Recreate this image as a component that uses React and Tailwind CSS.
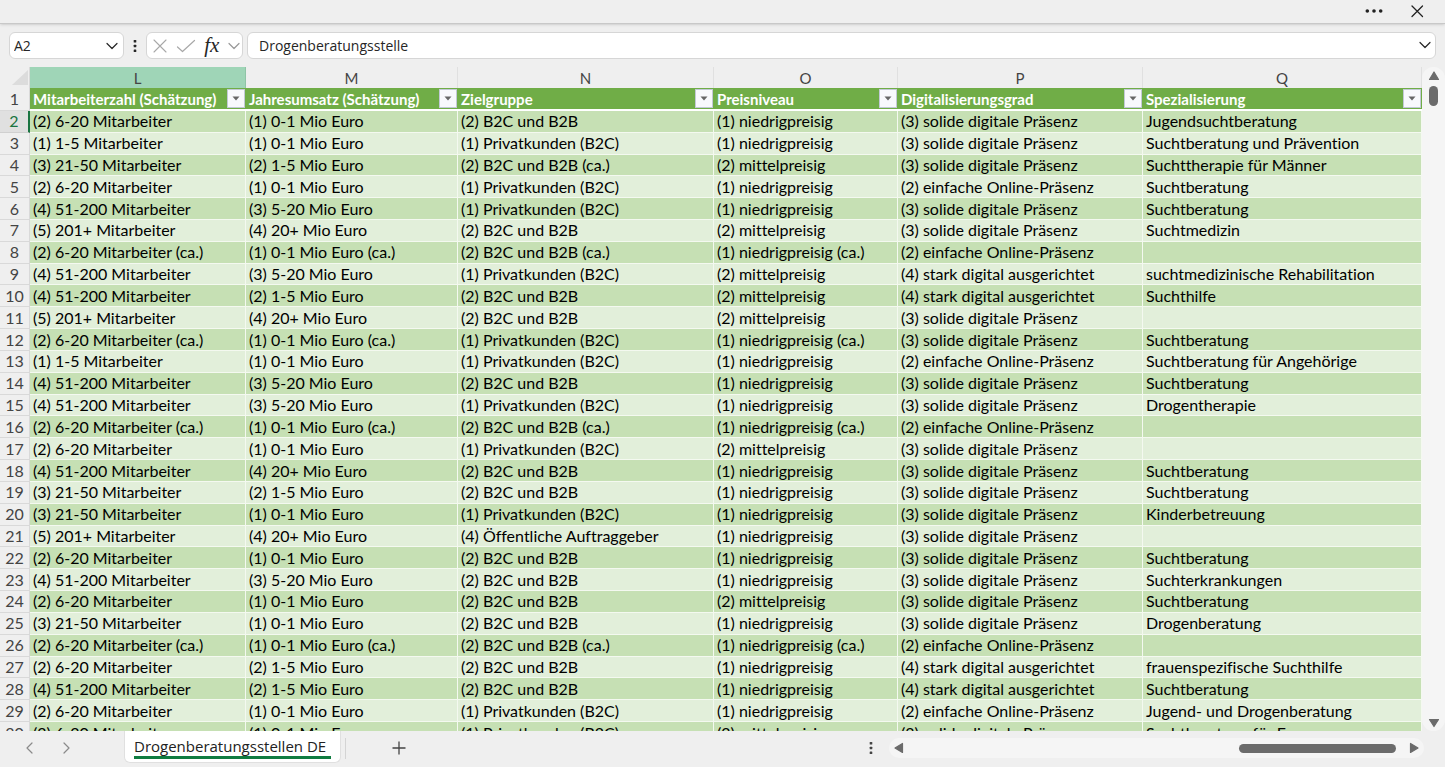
const M = {
  1: '(1) 1-5 Mitarbeiter',
  2: '(2) 6-20 Mitarbeiter',
  3: '(3) 21-50 Mitarbeiter',
  4: '(4) 51-200 Mitarbeiter',
  5: '(5) 201+ Mitarbeiter',
};
const U = { 1: '(1) 0-1 Mio Euro', 2: '(2) 1-5 Mio Euro', 3: '(3) 5-20 Mio Euro', 4: '(4) 20+ Mio Euro' };
const Z = { 1: '(1) Privatkunden (B2C)', 2: '(2) B2C und B2B', 4: '(4) Öffentliche Auftraggeber' };
const P = { 1: '(1) niedrigpreisig', 2: '(2) mittelpreisig' };
const D = { 2: '(2) einfache Online-Präsenz', 3: '(3) solide digitale Präsenz', 4: '(4) stark digital ausgerichtet' };

// [employees, revenue, audience, price, digital, speciality, columns marked "(ca.)"]
const DATA = [
  [2, 1, 2, 1, 3, 'Jugendsuchtberatung', ''],
  [1, 1, 1, 1, 3, 'Suchtberatung und Prävention', ''],
  [3, 2, 2, 2, 3, 'Suchttherapie für Männer', 'N'],
  [2, 1, 1, 1, 2, 'Suchtberatung', ''],
  [4, 3, 1, 1, 3, 'Suchtberatung', ''],
  [5, 4, 2, 2, 3, 'Suchtmedizin', ''],
  [2, 1, 2, 1, 2, '', 'LMNO'],
  [4, 3, 1, 2, 4, 'suchtmedizinische Rehabilitation', ''],
  [4, 2, 2, 2, 4, 'Suchthilfe', ''],
  [5, 4, 2, 2, 3, '', ''],
  [2, 1, 1, 1, 3, 'Suchtberatung', 'LMO'],
  [1, 1, 1, 1, 2, 'Suchtberatung für Angehörige', ''],
  [4, 3, 2, 1, 3, 'Suchtberatung', ''],
  [4, 3, 1, 1, 3, 'Drogentherapie', ''],
  [2, 1, 2, 1, 2, '', 'LMNO'],
  [2, 1, 1, 2, 3, '', ''],
  [4, 4, 2, 1, 3, 'Suchtberatung', ''],
  [3, 2, 2, 1, 3, 'Suchtberatung', ''],
  [3, 1, 1, 1, 3, 'Kinderbetreuung', ''],
  [5, 4, 4, 1, 3, '', ''],
  [2, 1, 2, 1, 3, 'Suchtberatung', ''],
  [4, 3, 2, 1, 3, 'Suchterkrankungen', ''],
  [2, 1, 2, 2, 3, 'Suchtberatung', ''],
  [3, 1, 2, 1, 3, 'Drogenberatung', ''],
  [2, 1, 2, 1, 2, '', 'LMNO'],
  [2, 2, 2, 1, 4, 'frauenspezifische Suchthilfe', ''],
  [4, 2, 2, 1, 4, 'Suchtberatung', ''],
  [2, 1, 1, 1, 2, 'Jugend- und Drogenberatung', ''],
  [2, 1, 1, 2, 3, 'Suchtberatung für Frauen', ''],
];

const COLUMNS = [
  ['L', 'Mitarbeiterzahl (Schätzung)'],
  ['M', 'Jahresumsatz (Schätzung)'],
  ['N', 'Zielgruppe'],
  ['O', 'Preisniveau'],
  ['P', 'Digitalisierungsgrad'],
  ['Q', 'Spezialisierung'],
];

function cellsOf([m, u, z, p, d, spec, ca]) {
  const mark = (text, col) => (ca.includes(col) ? `${text} (ca.)` : text);
  return [mark(M[m], 'L'), mark(U[u], 'M'), mark(Z[z], 'N'), mark(P[p], 'O'), D[d], spec];
}

function Chevron({ className, d = 'M1 3.5 6 8.5 11 3.5' }) {
  return (
    <svg viewBox="0 0 12 12" className={className} fill="none" stroke="currentColor" strokeWidth="1.2" strokeLinecap="round" strokeLinejoin="round" aria-hidden="true">
      <path d={d} />
    </svg>
  );
}

function Dots({ className }) {
  return (
    <svg viewBox="0 0 4 14" className={className} fill="currentColor" aria-hidden="true">
      <rect x="0.7" y="1" width="2.6" height="2.6" rx="0.6" />
      <rect x="0.7" y="5.7" width="2.6" height="2.6" rx="0.6" />
      <rect x="0.7" y="10.4" width="2.6" height="2.6" rx="0.6" />
    </svg>
  );
}

function Arrow({ d }) {
  return (
    <svg viewBox="0 0 12 12" className="h-3 w-3 text-[#6b6b6b]" fill="currentColor" stroke="currentColor" strokeWidth="1.2" strokeLinejoin="round" aria-hidden="true">
      <path d={d} />
    </svg>
  );
}

function TitleBar() {
  return (
    <header className="flex h-[24px] shrink-0 items-center justify-end gap-6 border-b border-[#c8c8c8] pr-5 pb-px text-[#222] shadow-sm">
      <button aria-label="Weitere Optionen" className="flex h-5 items-center">
        <svg viewBox="0 0 20 6" className="h-[6px] w-5" fill="currentColor" aria-hidden="true">
          <circle cx="2.3" cy="3" r="1.8" />
          <circle cx="9" cy="3" r="1.8" />
          <circle cx="15.700" cy="3" r="1.8" />
        </svg>
      </button>
      <button aria-label="Schließen" className="flex h-5 items-center">
        <svg viewBox="0 0 16 16" className="h-4 w-4" fill="none" stroke="currentColor" strokeWidth="1.3" strokeLinecap="round" aria-hidden="true">
          <path d="M3 3 13.500 13.500M13.500 3 3 13.500" />
        </svg>
      </button>
    </header>
  );
}

function FormulaBar() {
  return (
    <div className="flex h-[43px] shrink-0 items-center px-[9px] text-[#262626]">
      <div className="flex h-[27px] w-[115px] items-center rounded-md border border-[#d6d6d6] bg-white pr-[5px] pl-1">
        <input aria-label="Namenfeld" defaultValue="A2" className="min-w-0 flex-1 bg-transparent text-[14px] outline-none" />
        <button aria-label="Namen anzeigen">
          <Chevron className="h-3 w-3" />
        </button>
      </div>
      <Dots className="mx-[9px] h-[14px] w-1" />
      <div className="flex h-[27px] w-[97px] items-center justify-between rounded-md border border-[#d6d6d6] bg-white pr-[2px] pl-[6px]">
        <button aria-label="Abbrechen" className="text-[#a8a8a8]">
          <svg viewBox="0 0 14 14" className="h-[14px] w-[14px]" fill="none" stroke="currentColor" strokeWidth="1.1" strokeLinecap="round" aria-hidden="true">
            <path d="M1 1 13 13M13 1 1 13" />
          </svg>
        </button>
        <button aria-label="Eingeben" className="text-[#a8a8a8]">
          <svg viewBox="0 0 20 14" className="h-[14px] w-5" fill="none" stroke="currentColor" strokeWidth="1.2" strokeLinecap="round" strokeLinejoin="round" aria-hidden="true">
            <path d="M1.500 8 6.500 12.500 18.500 1.500" />
          </svg>
        </button>
        <button aria-label="Funktion einfügen" className="pb-[2px] font-['Liberation_Serif',serif] text-[21px] leading-5 italic">
          fx
        </button>
        <button aria-label="Funktionsliste" className="text-[#999]">
          <Chevron className="h-3 w-3" />
        </button>
      </div>
      <div className="ml-1 flex h-[27px] min-w-0 flex-1 items-center rounded-md border border-[#d6d6d6] bg-white pr-1 pl-[11px]">
        <input aria-label="Bearbeitungsleiste" defaultValue="Drogenberatungsstelle" className="min-w-0 flex-1 bg-transparent text-[14px] outline-none" />
        <button aria-label="Bearbeitungsleiste erweitern" className="pb-[2px]">
          <Chevron className="h-3 w-3" />
        </button>
      </div>
    </div>
  );
}

function Sheet() {
  return (
    <table className="h-[677px] w-full table-fixed border-separate border-spacing-0 font-[Lato,sans-serif] text-[16px] leading-5 whitespace-nowrap text-black [font-variant-ligatures:none]">
      <colgroup>
        <col className="w-[30px]" />
        <col className="w-[216px]" />
        <col className="w-[212px]" />
        <col className="w-[256px]" />
        <col className="w-[184px]" />
        <col className="w-[245px]" />
        <col />
      </colgroup>
      <thead className="text-[15px] text-[#444]">
        <tr className="h-[21px]">
          <td className="border-r border-[#d9d9d9] p-0">
            <svg viewBox="0 0 16 15" className="ml-auto mr-px h-[15px] w-4" fill="#dcdcdc" aria-hidden="true">
              <path d="M16 0V15H0Z" />
            </svg>
          </td>
          {COLUMNS.map(([letter], i) => (
            <th
              key={letter}
              scope="col"
              className={`border-r p-0 text-center font-normal ${i === 0 ? 'border-[#8fc4a6] bg-[#9fd5b7]' : 'border-[#e0e0e0]'}`}
            >
              {letter}
            </th>
          ))}
        </tr>
      </thead>
      <tbody>
        <tr className="h-[22px] bg-[#70ad47]">
          <th scope="row" className="border-r border-b border-[#d9d9d9] bg-[#efefef] p-0 font-normal text-[#444]">1</th>
          {COLUMNS.map(([letter, title]) => (
            <th key={letter} scope="col" className="border-b-2 border-white p-0 text-left text-[15px] font-bold text-white">
              <div className="flex h-5 items-end justify-between pr-px pl-[3px]">
                <span className="leading-[18px]">{title}</span>
                <button aria-label={`${title} filtern`} className="flex h-[19px] w-[18px] items-center justify-center border border-[#c3c9d6] bg-[#f8f9fc]">
                  <svg viewBox="0 0 8 5" className="h-[5px] w-2" fill="#666" aria-hidden="true">
                    <path d="M0.500 0.500h7L4 4.500Z" />
                  </svg>
                </button>
              </div>
            </th>
          ))}
        </tr>
        {DATA.map((record, r) => (
          <tr key={r} className={`h-[21px] ${r % 2 ? 'bg-[#e2efda]' : 'bg-[#c6e0b4]'}`}>
            <th
              scope="row"
              className={`border-b p-0 font-normal ${r === 0 ? 'border-r-2 border-b-[#d0d0d0] border-r-[#1a7441] bg-[#e0e0e0] text-[#1a7441]' : 'border-r border-[#d9d9d9] bg-[#efefef] text-[#444]'}`}
            >
              {r + 2}
            </th>
            {cellsOf(record).map((text, c) => (
              <td key={c} className="border-r border-b border-[#f4f9f0] p-0 pl-[3px]">{text}</td>
            ))}
          </tr>
        ))}
      </tbody>
    </table>
  );
}

function VerticalScroll() {
  return (
    <div className="flex w-[23px] shrink-0 flex-col items-center justify-between rounded-full bg-[#f5f5f5] pt-[3px] pb-[2px]">
      <div className="flex flex-col items-center gap-1">
        <button aria-label="Nach oben" className="flex">
          <Arrow d="M6 2 10.500 9.500H1.500Z" />
        </button>
        <div className="h-5 w-[9px] rounded-full bg-[#6b6b6b]" />
      </div>
      <button aria-label="Nach unten" className="flex">
        <Arrow d="M6 9.500 10.500 2.500H1.500Z" />
      </button>
    </div>
  );
}

function BottomBar() {
  return (
    <footer className="flex h-9 shrink-0 items-center pr-[21px] pb-[2px]">
      <div className="flex w-[124px] items-center gap-6 pl-6 text-[#8a8a8a]">
        <button aria-label="Vorheriges Blatt">
          <Chevron className="h-3 w-3" d="M8 1 3 6 8 11" />
        </button>
        <button aria-label="Nächstes Blatt">
          <Chevron className="h-3 w-3" d="M4 1 9 6 4 11" />
        </button>
      </div>
      <button className="flex h-8 min-w-[217px] self-start rounded-b-md border border-t-0 border-[#e0e0e0] bg-white px-[9px] text-left text-[15px] leading-6 text-[#222]">
        <span className="h-7 flex-1 border-b-[3px] border-[#107c41] pt-[3px]">Drogenberatungsstellen DE</span>
      </button>
      <div className="ml-1 h-[21px] w-px bg-[#d4d4d4]" />
      <button aria-label="Neues Blatt" className="ml-[46px] text-[#444]">
        <svg viewBox="0 0 14 14" className="h-[14px] w-[14px]" fill="none" stroke="currentColor" strokeWidth="1.3" aria-hidden="true">
          <path d="M7 0.500V13.500M0.500 7H13.500" />
        </svg>
      </button>
      <div className="flex-1" />
      <Dots className="h-[14px] w-1 text-[#444]" />
      <div className="ml-4 flex h-5 w-[535px] items-center rounded-full bg-[#f5f5f5] px-1">
        <button aria-label="Nach links">
          <Arrow d="M2 6 9.500 1.500V10.500Z" />
        </button>
        <div className="flex flex-1 justify-end pr-3">
          <div className="h-[9px] w-[157px] rounded-full bg-[#6b6b6b]" />
        </div>
        <button aria-label="Nach rechts">
          <Arrow d="M10 6 2.500 1.500V10.500Z" />
        </button>
      </div>
    </footer>
  );
}

export default function App() {
  return (
    <div className="flex h-screen flex-col overflow-hidden bg-[#efefef] font-['Open_Sans',sans-serif]">
      <TitleBar />
      <FormulaBar />
      <main className="flex min-h-0 flex-1">
        <div className="min-w-0 flex-1 overflow-hidden">
          <Sheet />
        </div>
        <VerticalScroll />
      </main>
      <BottomBar />
    </div>
  );
}
